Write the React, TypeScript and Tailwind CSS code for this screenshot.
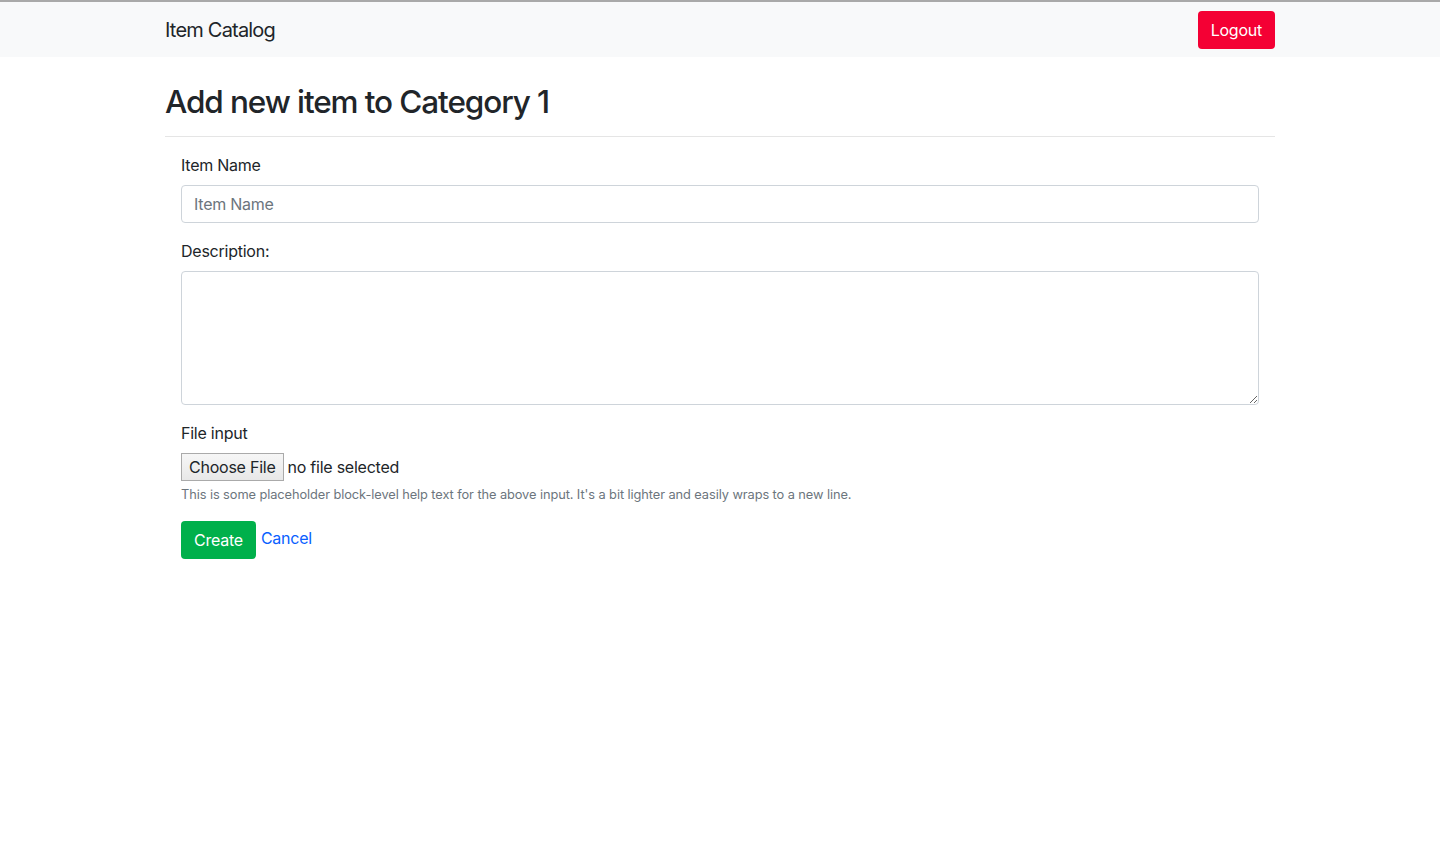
import { useState } from 'react'

const font = { fontFamily: 'Inter, "Liberation Sans", sans-serif' }

const Navbar = () => (
  <div className="border-t-2 border-[#a9a9a9] bg-[#f8f9fa]">
    <div className="mx-auto flex h-[55px] max-w-[1140px] items-center justify-between px-[15px]">
      <span className="text-[20px] leading-none tracking-[-0.04em] text-[#212529]">Item Catalog</span>
      <button
        type="button"
        className="h-[38px] rounded-[4px] bg-[#f40034] px-[13px] text-[16px] text-white"
      >
        Logout
      </button>
    </div>
  </div>
)

export default function App() {
  const [name, setName] = useState('')
  const [description, setDescription] = useState('')

  return (
    <div className="min-h-screen bg-white tracking-[-0.015em] text-[#212529]" style={font}>
      <Navbar />
      <div className="mx-auto max-w-[1140px] px-[15px]">
        <h2 className="mt-[26px] mb-[15px] text-[31.5px] font-medium leading-[38px] tracking-[-0.035em]">
          Add new item to Category 1
        </h2>
        <hr className="border-t border-[#e5e5e5]" />
        <form className="px-4 pt-[16px]" onSubmit={(e) => e.preventDefault()}>
          <div className="mb-4">
            <label className="mb-2 block text-[16px] leading-6">Item Name</label>
            <input
              value={name}
              onChange={(e) => setName(e.target.value)}
              placeholder="Item Name"
              className="block h-[38px] w-full rounded-[4px] border border-[#ced4da] px-3 text-[16px] text-[#495057] placeholder:text-[#6c757d] outline-none"
            />
          </div>
          <div className="mb-4">
            <label className="mb-2 block text-[16px] leading-6">Description:</label>
            <textarea
              value={description}
              onChange={(e) => setDescription(e.target.value)}
              className="block h-[134px] w-full rounded-[4px] border border-[#ced4da] px-3 py-1.5 text-[16px] outline-none"
            />
          </div>
          <div className="mb-4">
            <label className="mb-2 block text-[16px] leading-6">File input</label>
            <div className="flex h-[28px] items-center text-[16px]">
              <span className="flex h-[28px] items-center border border-[#aaaaaa] bg-gradient-to-b from-[#f6f6f6] to-[#e8e8e8] px-[7px]">
                Choose File
              </span>
              <span className="ml-1">no file selected</span>
            </div>
            <small className="mt-1 block text-[12.8px] leading-[19px] tracking-[-0.006em] text-[#6c757d]">
              This is some placeholder block-level help text for the above input. It's a bit lighter and easily wraps to a new line.
            </small>
          </div>
          <div className="mt-[17px] flex items-start gap-[5px]">
            <button
              type="submit"
              className="h-[38px] rounded-[4px] bg-[#00b04b] px-[13px] text-[16px] text-white"
            >
              Create
            </button>
            <a href="#" className="pt-[5px] text-[16px] leading-6 text-[#0a60ff]">
              Cancel
            </a>
          </div>
        </form>
      </div>
    </div>
  )
}
